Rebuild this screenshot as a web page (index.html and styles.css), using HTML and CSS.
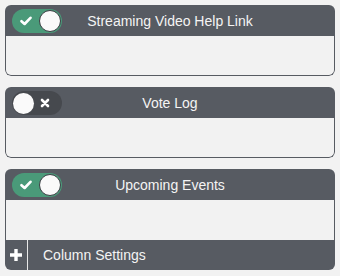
FILE: index.html
```html
<!DOCTYPE html>
<html>
<head>
<meta charset="utf-8">
<link rel="stylesheet" href="styles.css">
</head>
<body>
<div class="list">
  <section class="card">
    <header class="card-head">
      <span class="toggle on">
        <svg class="tick" width="12" height="10" viewBox="0 0 12 10"><path d="M1.5 5.2 L4.6 8 L10.5 1.8" fill="none" stroke="#fff" stroke-width="2.6" stroke-linecap="round" stroke-linejoin="round"/></svg>
        <span class="knob"></span>
      </span>
      <span class="title">Streaming Video Help Link</span>
    </header>
    <div class="card-body"></div>
  </section>
  <section class="card">
    <header class="card-head">
      <span class="toggle off">
        <span class="knob"></span>
        <svg class="cross" width="10" height="10" viewBox="0 0 10 10"><path d="M2 2 L8 8 M8 2 L2 8" fill="none" stroke="#fff" stroke-width="2.6" stroke-linecap="round"/></svg>
      </span>
      <span class="title">Vote Log</span>
    </header>
    <div class="card-body"></div>
  </section>
  <section class="card">
    <header class="card-head">
      <span class="toggle on">
        <svg class="tick" width="12" height="10" viewBox="0 0 12 10"><path d="M1.5 5.2 L4.6 8 L10.5 1.8" fill="none" stroke="#fff" stroke-width="2.6" stroke-linecap="round" stroke-linejoin="round"/></svg>
        <span class="knob"></span>
      </span>
      <span class="title">Upcoming Events</span>
    </header>
    <div class="card-body"></div>
    <footer class="card-foot">
      <span class="add">
        <svg width="14" height="14" viewBox="0 0 14 14"><path d="M7 1 V13 M1 7 H13" fill="none" stroke="#fff" stroke-width="3.4"/></svg>
      </span>
      <span class="foot-label">Column Settings</span>
    </footer>
  </section>
</div>
</body>
</html>
```

FILE: styles.css
```css
html, body {
  margin: 0;
  padding: 0;
  background: #f2f2f2;
}
body {
  font-family: "Liberation Sans", Arial, sans-serif;
}
.list {
  padding: 5px 5px 0 5px;
  display: flex;
  flex-direction: column;
  gap: 11px;
}
.card {
  display: flex;
  flex-direction: column;
  border-radius: 6px;
  overflow: hidden;
}
.card-head {
  height: 31px;
  background: #575b62;
  position: relative;
  display: flex;
  align-items: center;
  justify-content: center;
}
.title {
  color: #f4f4f4;
  font-size: 14px;
  line-height: 16px;
}
.toggle {
  position: absolute;
  left: 7px;
  top: 4px;
  width: 50px;
  height: 24px;
  border-radius: 12px;
  display: flex;
  align-items: center;
  box-sizing: border-box;
}
.toggle.on {
  background: #4a9a79;
  justify-content: space-between;
  padding: 0 1px 0 8px;
}
.toggle.on .knob {
  width: 22px;
  height: 22px;
  box-sizing: border-box;
  border-radius: 50%;
  background: #fafafa;
  border: 1px solid #3b3e44;
}
.toggle.off {
  background: #46494e;
  justify-content: space-between;
  padding: 0 12px 0 1px;
}
.toggle.off .knob {
  width: 21px;
  height: 21px;
  border-radius: 50%;
  background: #fafafa;
}
.tick, .cross {
  display: block;
}
.card-body {
  height: 39px;
  border: 1px solid #575b62;
  border-top: none;
  border-radius: 0 0 6px 6px;
  background: #f2f2f2;
}
.card:has(.card-foot) .card-body {
  height: 40px;
  border-bottom: none;
  border-radius: 0;
}
.card-foot {
  height: 30px;
  background: #575b62;
  display: flex;
  align-items: stretch;
}
.add {
  width: 22px;
  border-right: 1px solid #e8e8e8;
  display: flex;
  align-items: center;
  justify-content: center;
}
.add svg {
  display: block;
}
.foot-label {
  color: #f4f4f4;
  font-size: 14px;
  display: flex;
  align-items: center;
  padding-left: 15px;
}
```
